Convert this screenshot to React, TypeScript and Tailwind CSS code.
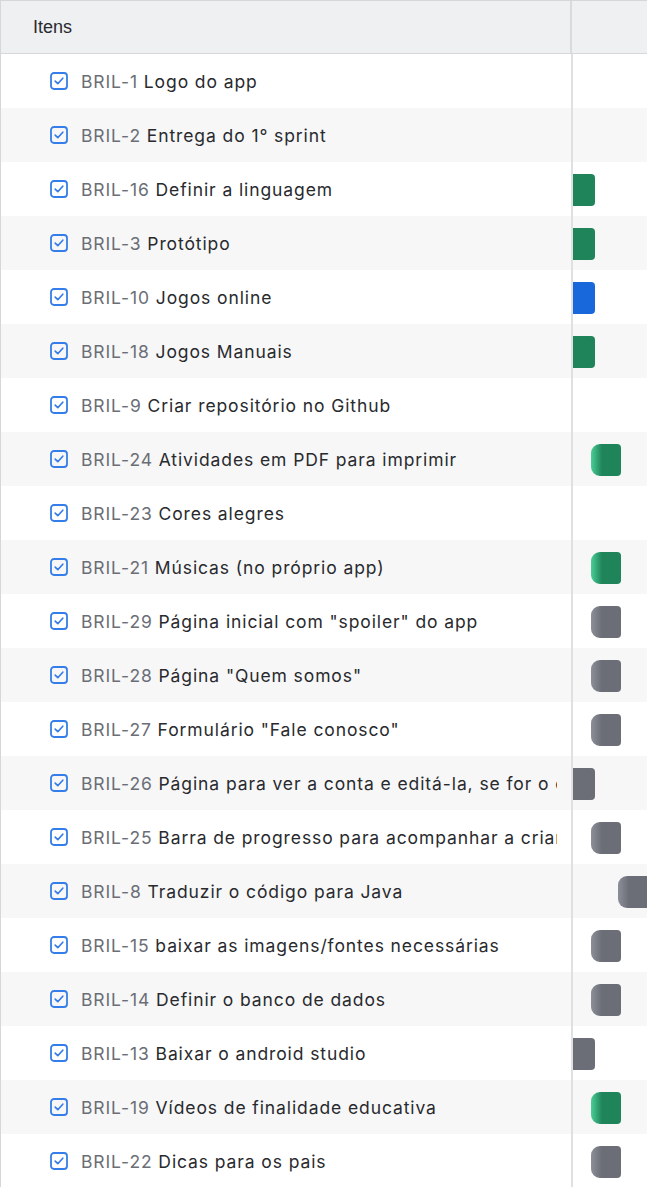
import React from 'react'

type Bar = 'none' | 'green' | 'blue' | 'gray'
type Shape = 'edge' | 'pill' | 'far'

type Item = { key: string; title: string; bar: Bar; shape?: Shape }

const items: Item[] = [
  { key: 'BRIL-1', title: 'Logo do app', bar: 'none' },
  { key: 'BRIL-2', title: 'Entrega do 1° sprint', bar: 'none' },
  { key: 'BRIL-16', title: 'Definir a linguagem', bar: 'green', shape: 'edge' },
  { key: 'BRIL-3', title: 'Protótipo', bar: 'green', shape: 'edge' },
  { key: 'BRIL-10', title: 'Jogos online', bar: 'blue', shape: 'edge' },
  { key: 'BRIL-18', title: 'Jogos Manuais', bar: 'green', shape: 'edge' },
  { key: 'BRIL-9', title: 'Criar repositório no Github', bar: 'none' },
  { key: 'BRIL-24', title: 'Atividades em PDF para imprimir', bar: 'green', shape: 'pill' },
  { key: 'BRIL-23', title: 'Cores alegres', bar: 'none' },
  { key: 'BRIL-21', title: 'Músicas (no próprio app)', bar: 'green', shape: 'pill' },
  { key: 'BRIL-29', title: 'Página inicial com "spoiler" do app', bar: 'gray', shape: 'pill' },
  { key: 'BRIL-28', title: 'Página "Quem somos"', bar: 'gray', shape: 'pill' },
  { key: 'BRIL-27', title: 'Formulário "Fale conosco"', bar: 'gray', shape: 'pill' },
  { key: 'BRIL-26', title: 'Página para ver a conta e editá-la, se for o caso', bar: 'gray', shape: 'edge' },
  { key: 'BRIL-25', title: 'Barra de progresso para acompanhar a criança', bar: 'gray', shape: 'pill' },
  { key: 'BRIL-8', title: 'Traduzir o código para Java', bar: 'gray', shape: 'far' },
  { key: 'BRIL-15', title: 'baixar as imagens/fontes necessárias', bar: 'gray', shape: 'pill' },
  { key: 'BRIL-14', title: 'Definir o banco de dados', bar: 'gray', shape: 'pill' },
  { key: 'BRIL-13', title: 'Baixar o android studio', bar: 'gray', shape: 'edge' },
  { key: 'BRIL-19', title: 'Vídeos de finalidade educativa', bar: 'green', shape: 'pill' },
  { key: 'BRIL-22', title: 'Dicas para os pais', bar: 'gray', shape: 'pill' },
]

function TaskIcon() {
  return (
    <svg width="18" height="18" viewBox="0 0 18 18" className="shrink-0">
      <rect x="1" y="1" width="16" height="16" rx="3" fill="none" stroke="#357de8" strokeWidth="1.8" />
      <path d="M5.2 9.2 L7.8 11.7 L12.8 6.2" fill="none" stroke="#357de8" strokeWidth="1.7" strokeLinecap="round" strokeLinejoin="round" />
    </svg>
  )
}

function TimelineBar({ bar, shape }: { bar: Bar; shape?: Shape }) {
  if (bar === 'none') return null
  if (shape === 'edge') {
    const color = bar === 'green' ? 'bg-[#1f845a]' : bar === 'blue' ? 'bg-[#1868db]' : 'bg-[#6b6e76]'
    return <div className={`absolute top-[12px] left-0 h-[32px] w-[22px] rounded-r-[4px] ${color}`} />
  }
  const grad =
    bar === 'green'
      ? 'bg-[linear-gradient(90deg,#4bce97_0px,#1f845a_11px)]'
      : 'bg-[linear-gradient(90deg,#8c8f97_0px,#6b6e76_11px)]'
  const left = shape === 'far' ? 'left-[45px] w-[40px]' : 'left-[18px] w-[30px]'
  return <div className={`absolute top-[12px] h-[32px] rounded-l-[9px] rounded-r-[4px] ${left} ${grad}`} />
}

export default function App() {
  return (
    <div className="w-[647px] h-[1187px] overflow-hidden bg-white font-['Inter',sans-serif]">
      <div className="flex h-[54px] border-t border-l border-b border-[#d6d7da] bg-[#eff0f2]">
        <div className="w-[571px] shrink-0 border-r-2 border-[#d9dadd] flex items-center pl-[32px] text-[18px] text-[#292a2e] font-['Liberation_Sans',sans-serif]">
          Itens
        </div>
        <div className="flex-1" />
      </div>
      {items.map((it, i) => (
        <div
          key={it.key}
          className={`flex h-[54px] border-l border-[#d6d7da] ${i % 2 === 1 ? 'bg-[#f7f7f8]' : 'bg-white'}`}
        >
          <div className="w-[572px] shrink-0 border-r-2 border-[#dfe0e2] flex items-center pl-[49px] pr-[14px] overflow-hidden">
            <TaskIcon />
            <div className="ml-[13px] pt-[2px] whitespace-nowrap overflow-hidden text-[17.5px] leading-[24px] tracking-[0.9px]">
              <span className="text-[#6b6e76]">{it.key}</span>{' '}
              <span className="text-[#292a2e]">{it.title}</span>
            </div>
          </div>
          <div className="relative flex-1 overflow-hidden">
            <TimelineBar bar={it.bar} shape={it.shape} />
          </div>
        </div>
      ))}
    </div>
  )
}
